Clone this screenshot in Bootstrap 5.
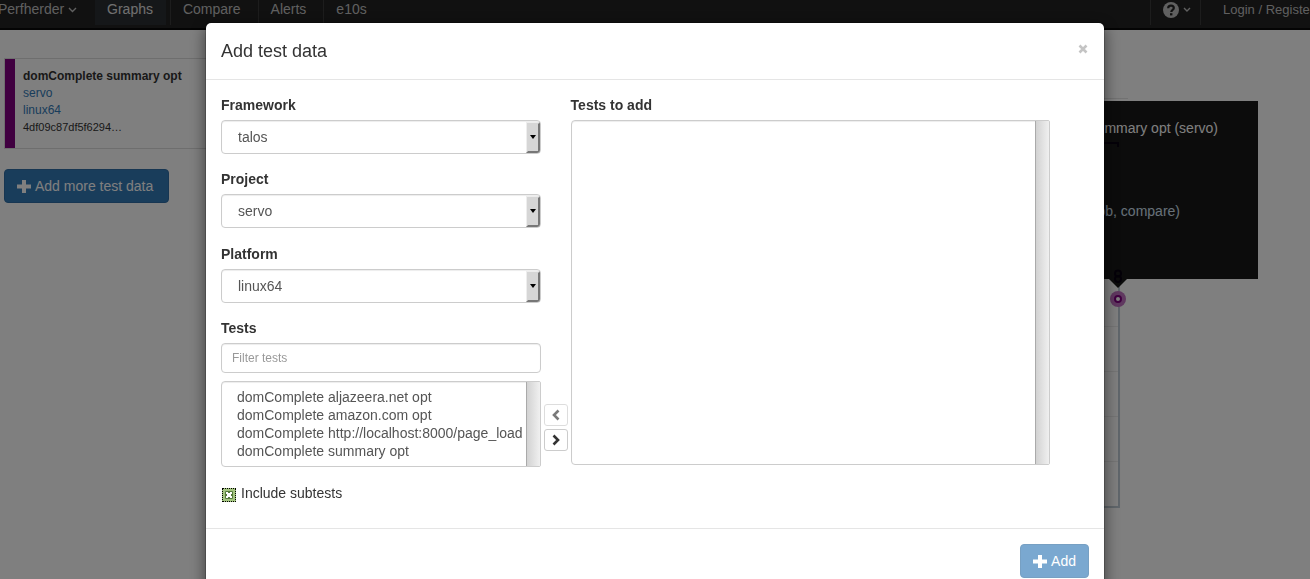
<!DOCTYPE html>
<html lang="en">
<head>
<meta charset="utf-8">
<meta name="viewport" content="width=device-width, initial-scale=1">
<title>Perfherder</title>
<link href="https://cdn.jsdelivr.net/npm/bootstrap@5.3.0/dist/css/bootstrap.min.css" rel="stylesheet">
<style>
body { font: 14px/20px "Liberation Sans", Arial, sans-serif; color: #333; background: #fff; overflow: hidden; min-height: 100vh; }
.topbar { height: 30px; background: #222; border-bottom: 2px solid #080808; }
.topbar a { color: #c0c0c0; text-decoration: none; line-height: 19px; height: 25px; padding: 0 13px 0 12px; white-space: nowrap; }
.topbar a.current { background: #2b2e32; color: #e0e0e0; }
.topbar .sep { border-left: 1px solid #3a3a3a; margin-left: 4px; }
.topbar .home { padding-left: 0; margin-left: -2px; padding-right: 18px; }
.topbar .help { padding: 0 9px 0 12px; }
.topbar .login { font-size: 13px; padding: 0 0 0 22px; width: 110px; }
.series-col { width: 260px; padding: 28px 0 0 4px; }
.series { border: 1px solid #ddd; font-size: 12px; line-height: 17px; height: 91px; margin-bottom: 20px; }
.series .swatch { width: 10px; background: #800080; }
.series .info { padding: 9px 8px; }
.series a { color: #337ab7; text-decoration: none; display: block; }
.series .rev { font-size: 11px; color: #333; }
.btn-main { --bs-btn-font-size: 14px; --bs-btn-line-height: 20px; --bs-btn-padding-x: 12px; --bs-btn-padding-y: 6px; --bs-btn-border-radius: 4px; --bs-btn-bg: #337ab7; --bs-btn-border-color: #2e6da4; --bs-btn-color: #fff; --bs-btn-disabled-bg: #337ab7; --bs-btn-disabled-border-color: #2e6da4; --bs-btn-disabled-color: #fff; height: 34px; display: inline-flex; align-items: center; gap: 4px; }
.btn-wide { padding-right: 15px; }
.plot { width: 330px; height: 549px; }
.plot-tip { top: 71px; right: 52px; width: 280px; height: 178px; background: #181818; color: #fff; padding: 17px 40px; }
.plot-tip .links { padding: 63px 38px 0 0; color: #d0e0f0; }
.modal { display: block; overflow: hidden; }
.modal-backdrop { --bs-backdrop-opacity: .5; }
.modal-dialog { max-width: 900px; margin: 22px auto; }
.modal-content { border: 1px solid rgba(0,0,0,.2); border-radius: 6px; box-shadow: 0 5px 15px rgba(0,0,0,.5); color: #333; }
.modal-header { padding: 15px; border-bottom: 1px solid #e5e5e5; }
.modal-title { font-size: 18px; line-height: 26px; }
.x-close { border: 0; background: none; padding: 0; width: 12px; height: 12px; line-height: 0; margin-bottom: 4px; }
.modal-body { padding: 15px 54px 15px 15px; display: grid; grid-template-columns: minmax(0,2fr) 24px minmax(0,3fr); column-gap: 3px; }
.modal-body .field-label { font-weight: bold; margin-bottom: 5px; display: block; }
.field { margin-bottom: 15px; }
.picker, .filter, .listing { border: 1px solid #ccc; border-radius: 4px; color: #555; background-color: #fff; box-shadow: inset 0 1px 1px rgba(0,0,0,.075); width: 100%; }
.picker { display: block; appearance: none; height: 34px; padding: 6px 16px; font-size: 14px; line-height: 20px; background-repeat: no-repeat; background-position: right 0 top 1px; background-image: url("data:image/svg+xml,%3Csvg xmlns='http://www.w3.org/2000/svg' width='14' height='31'%3E%3Cpath fill='%23eee' d='M0 0h14v31H0z'/%3E%3Cpath fill='%23777' d='M14 0v31H0l2-2h10V2z'/%3E%3Cpath fill='%23d6d6d6' d='M1 1h11v28H1z'/%3E%3Cpath d='M4 13h6l-3 4z'/%3E%3C/svg%3E"); }
.filter { height: 30px; padding: 5px 10px; font-size: 12px; line-height: 18px; margin-bottom: 8px; display: block; }
.filter::placeholder { color: #999; opacity: 1; }
.listing { display: flex; overflow: hidden; border-radius: 4px 2px 2px 4px; }
.listing select { flex: 1; min-width: 0; border: 0; padding: 7px 0 5px 12px; background: none; color: #555; font-size: 14px; overflow: hidden; outline: 0; }
.listing option { padding: 0 3px; line-height: 18px; height: 18px; min-height: 18px; }
.listing .track { width: 14px; border-left: 1px solid #aaa; background: linear-gradient(90deg,#d2d2d2,#f0f0f0); }
.picks { grid-column: 1; grid-row: 1; display: flex; flex-direction: column; justify-content: space-between; }
.tests-list { grid-column: 1; grid-row: 2; height: 86px; }
.chosen { grid-column: 3; grid-row: 1 / 3; margin-bottom: 3px; }
.chosen .listing { height: 345px; }
.move { grid-column: 2; grid-row: 2; gap: 3px; padding-top: 5px; }
.move button { width: 24px; height: 22px; padding: 0; border: 1px solid #ccc; border-radius: 3px; background: #fff; line-height: 0; color: #333; }
.move button:disabled { opacity: .65; color: #333; }
.subtests { grid-column: 1 / -1; grid-row: 3; margin: 15px 0 10px; gap: 5px; }
.subtests input { appearance: none; width: 14px; height: 14px; margin: 5px 0 0 1px; border: 1px dotted #000; background: #a3c47f url("data:image/svg+xml,%3Csvg xmlns='http://www.w3.org/2000/svg' width='12' height='12'%3E%3Cpath fill='%23fff' stroke='%23567a3c' d='M2.500 2.500h7v7h-7z'/%3E%3Cpath fill='%23567a3c' d='M5 3h2v1H5zM5 8h2v1H5zM3 5h1v2H3zM8 5h1v2H8z'/%3E%3C/svg%3E") center no-repeat; }
.modal-footer { padding: 15px; border-top: 1px solid #e5e5e5; }
.modal-footer > * { margin: 0; }
</style>
</head>
<body>
<nav class="topbar d-flex">
  <a class="home" href="#">Perfherder <svg width="9" height="6" viewBox="0 0 9 6"><path d="M1 1l3.500 3.500L8 1" fill="none" stroke="currentColor" stroke-width="1.400"/></svg></a>
  <a class="current" href="#">Graphs</a>
  <a class="sep" href="#">Compare</a>
  <a class="sep" href="#">Alerts</a>
  <a class="sep" href="#">e10s</a>
  <a class="sep help ms-auto" href="#" aria-label="Help"><svg width="16" height="16" viewBox="0 0 16 16"><circle cx="8" cy="8" r="8" fill="#c0c0c0"/><path d="M5.200 6.200C5.200 2.800 10.800 2.900 10.800 6.100 10.800 8 8.300 7.800 8.300 10" fill="none" stroke="#222" stroke-width="2.200"/><path d="M7 11.200h2.400v2.200H7z" fill="#222"/></svg> <svg width="8" height="6" viewBox="0 0 8 6"><path d="M1 1l3 3 3-3" fill="none" stroke="currentColor" stroke-width="1.400"/></svg></a>
  <a class="sep login ms-0" href="#">Login / Register</a>
</nav>
<main class="d-flex justify-content-between">
  <section class="series-col">
    <div class="series d-flex">
      <div class="swatch"></div>
      <div class="info"><strong>domComplete summary opt</strong><a href="#">servo</a><a href="#">linux64</a><a class="rev" href="#">4df09c87df5f6294…</a></div>
    </div>
    <button type="button" class="btn btn-main btn-wide"><svg width="14" height="13" viewBox="0 0 14 13"><path d="M5 0h4v4.500h5v4H9V13H5V8.500H0v-4h5z" fill="currentColor"/></svg>Add more test data</button>
  </section>
  <section class="plot position-relative">
    <div class="plot-tip position-absolute text-end"><div>summary opt (servo)</div><div class="links">(job, compare)</div></div>
    <svg class="position-relative" width="330" height="549" viewBox="980 30 330 549" aria-hidden="true">
      <path d="M980 98.500h148" stroke="#e4e4e4"/>
      <path d="M980 326.500h138M980 371.500h138M980 416.500h138M980 461.500h138" stroke="#ececec"/>
      <path d="M1119 280v227H980" fill="none" stroke="#c0ccd6" stroke-width="2"/>
      <path d="M1104 143h14v4" fill="none" stroke="#080010" stroke-width="2"/>
      <path d="M1108 278h20l-10 10z" fill="#181818"/>
      <g fill="none" stroke="#080010" stroke-width="2"><circle cx="1118" cy="273.500" r="3"/><circle cx="1118" cy="279" r="3"/></g>
      <circle cx="1118" cy="299" r="8" fill="#c070c0"/>
      <circle cx="1118" cy="299" r="3" fill="#fff" stroke="#800080" stroke-width="2"/>
    </svg>
  </section>
</main>

<div class="modal-backdrop show"></div>
<div class="modal" role="dialog" aria-labelledby="dlgTitle">
  <div class="modal-dialog">
    <form class="modal-content">
      <div class="modal-header">
        <h4 class="modal-title fw-normal" id="dlgTitle">Add test data</h4>
        <button type="button" class="x-close" aria-label="Close"><svg width="10" height="10" viewBox="0 0 10 10"><path d="M1.500 1.500l7 7M8.500 1.500l-7 7" stroke="#c4c4c4" stroke-width="2.600"/></svg></button>
      </div>
      <div class="modal-body">
        <div class="picks">
          <div class="field"><label class="field-label" for="fw">Framework</label><select class="picker" id="fw"><option>talos</option></select></div>
          <div class="field"><label class="field-label" for="pr">Project</label><select class="picker" id="pr"><option>servo</option></select></div>
          <div class="field"><label class="field-label" for="pl">Platform</label><select class="picker" id="pl"><option>linux64</option></select></div>
          <div><label class="field-label" for="tests">Tests</label>
          <input class="filter" type="text" placeholder="Filter tests" aria-label="Filter tests"></div>
        </div>
        <div class="listing tests-list"><select id="tests" multiple size="4"><option>domComplete aljazeera.net opt</option><option>domComplete amazon.com opt</option><option>domComplete http://localhost:8000/page_load</option><option>domComplete summary opt</option></select><div class="track"></div></div>
        <div class="move d-flex flex-column justify-content-center">
          <button type="button" disabled aria-label="Remove"><svg width="12" height="12" viewBox="0 0 12 12"><path d="M8.500 1.500L4 6l4.500 4.500" fill="none" stroke="currentColor" stroke-width="2.600"/></svg></button>
          <button type="button" aria-label="Add to list"><svg width="12" height="12" viewBox="0 0 12 12"><path d="M3.500 1.500L8 6l-4.500 4.500" fill="none" stroke="currentColor" stroke-width="2.600"/></svg></button>
        </div>
        <div class="chosen"><label class="field-label" for="added">Tests to add</label>
          <div class="listing"><select id="added" multiple></select><div class="track"></div></div></div>
        <div class="subtests d-flex"><input type="checkbox" id="sub"><label for="sub">Include subtests</label></div>
      </div>
      <div class="modal-footer"><button type="button" class="btn btn-main" disabled><svg width="14" height="13" viewBox="0 0 14 13"><path d="M5 0h4v4.500h5v4H9V13H5V8.500H0v-4h5z" fill="currentColor"/></svg>Add</button></div>
    </form>
  </div>
</div>
<script src="https://cdn.jsdelivr.net/npm/bootstrap@5.3.0/dist/js/bootstrap.bundle.min.js"></script>
</body>
</html>
